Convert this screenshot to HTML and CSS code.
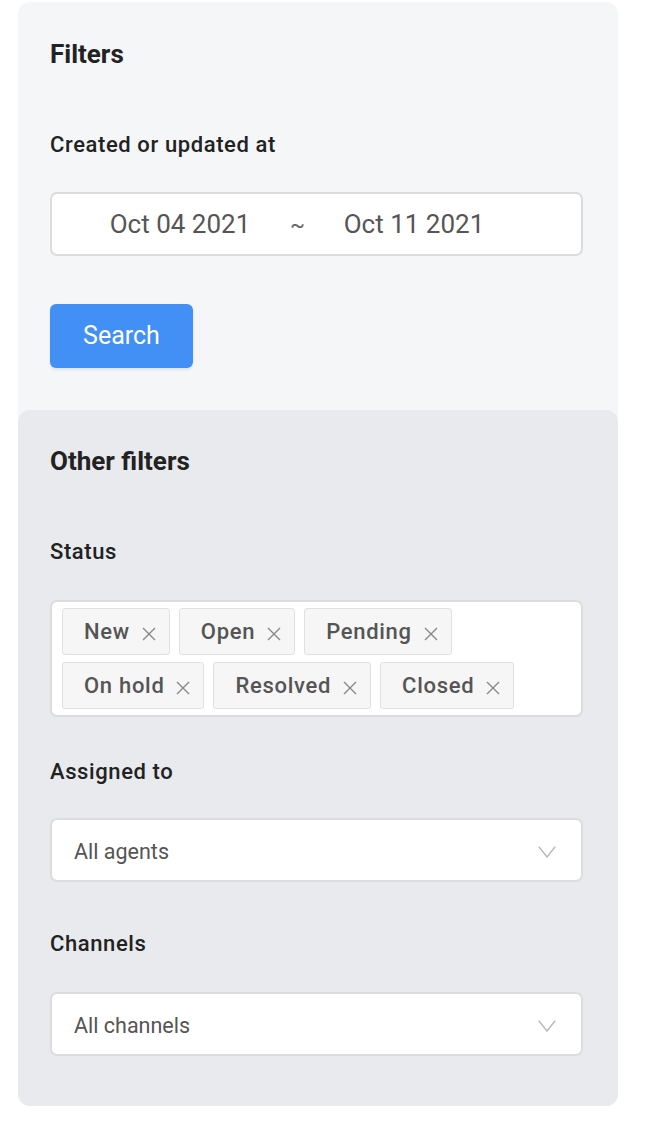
FILE: index.html
```html
<!DOCTYPE html>
<html lang="en">
<head>
<meta charset="utf-8">
<title>Filters</title>
<link rel="stylesheet" href="styles.css">
</head>
<body>
<aside class="panel">
  <section class="section section-top">
    <h2 class="title">Filters</h2>
    <div class="label label-first">Created or updated at</div>
    <div class="date-range">
      <span class="date date-from">Oct 04 2021</span>
      <span class="date-sep">~</span>
      <span class="date date-to">Oct 11 2021</span>
    </div>
    <button class="btn-search" type="button">Search</button>
  </section>
  <section class="section section-other">
    <h2 class="title">Other filters</h2>
    <div class="label label-first">Status</div>
    <div class="tags-box">
      <span class="tag">New<svg class="tag-x" viewBox="0 0 14 14"><path d="M1 1L13 13M13 1L1 13"/></svg></span>
      <span class="tag">Open<svg class="tag-x" viewBox="0 0 14 14"><path d="M1 1L13 13M13 1L1 13"/></svg></span>
      <span class="tag">Pending<svg class="tag-x" viewBox="0 0 14 14"><path d="M1 1L13 13M13 1L1 13"/></svg></span>
      <span class="tag">On hold<svg class="tag-x" viewBox="0 0 14 14"><path d="M1 1L13 13M13 1L1 13"/></svg></span>
      <span class="tag">Resolved<svg class="tag-x" viewBox="0 0 14 14"><path d="M1 1L13 13M13 1L1 13"/></svg></span>
      <span class="tag">Closed<svg class="tag-x" viewBox="0 0 14 14"><path d="M1 1L13 13M13 1L1 13"/></svg></span>
    </div>
    <div class="label label-assigned">Assigned to</div>
    <div class="select select-agents">
      <span class="select-text">All agents</span>
      <svg class="chevron" viewBox="0 0 18 12"><path d="M0.8 0.8L9 11L17.2 0.8"/></svg>
    </div>
    <div class="label label-channels">Channels</div>
    <div class="select select-channels">
      <span class="select-text">All channels</span>
      <svg class="chevron" viewBox="0 0 18 12"><path d="M0.8 0.8L9 11L17.2 0.8"/></svg>
    </div>
  </section>
</aside>
</body>
</html>
```

FILE: styles.css
```css
* { box-sizing: border-box; }

body {
  margin: 0;
  background: #ffffff;
  font-family: Roboto, "Liberation Sans", Arial, sans-serif;
  color: #222222;
}

.panel {
  width: 600px;
  margin: 2px 0 0 18px;
  background: #f5f6f8;
  border-radius: 12px;
}

.section-top {
  padding: 36px 35px 42px 32px;
}

.section-other {
  background: #e9eaee;
  border-radius: 12px;
  padding: 35px 35px 50px 32px;
}

.title {
  margin: 0;
  font-size: 26px;
  line-height: 32px;
  font-weight: 700;
  color: #222222;
}

.label {
  font-size: 22px;
  line-height: 28px;
  font-weight: 500;
  letter-spacing: 0.6px;
  color: #222222;
}

.label-first { margin-top: 61px; }
.label-assigned { margin-top: 41px; }
.label-channels { margin-top: 48px; }

.date-range {
  margin-top: 33px;
  height: 64px;
  background: #ffffff;
  border: 2px solid #dcdcdc;
  border-radius: 7px;
  display: flex;
  align-items: center;
  font-size: 26px;
  color: #555555;
}

.date {
  width: 220px;
  text-align: center;
}

.date-from { margin-left: 18px; }

.date-sep {
  width: 14px;
  text-align: center;
  font-size: 22px;
  color: #666666;
}

.btn-search {
  display: block;
  margin-top: 48px;
  width: 143px;
  height: 64px;
  padding: 0 0 2px;
  border: none;
  border-radius: 6px;
  background: #4290f5;
  color: #ffffff;
  font-family: Roboto, "Liberation Sans", Arial, sans-serif;
  font-size: 25px;
  font-weight: 400;
  box-shadow: 0 2px 3px rgba(0, 0, 0, 0.08);
}

.tags-box {
  margin-top: 34px;
  background: #ffffff;
  border: 2px solid #dcdcdc;
  border-radius: 7px;
  padding: 6px 10px;
  display: flex;
  flex-wrap: wrap;
  gap: 7px 9px;
}

.tag {
  display: inline-flex;
  align-items: center;
  height: 47px;
  padding: 0 13px 0 21px;
  background: #f6f6f6;
  border: 1px solid #e0e0e0;
  border-radius: 3px;
  font-size: 22px;
  font-weight: 500;
  letter-spacing: 0.7px;
  color: #555555;
}

.tag-x {
  width: 14px;
  height: 14px;
  margin-left: 12px;
  margin-top: 4px;
  fill: none;
  stroke: #888888;
  stroke-width: 1.4;
}

.select {
  height: 64px;
  background: #ffffff;
  border: 2px solid #dcdcdc;
  border-radius: 7px;
  display: flex;
  align-items: center;
  justify-content: space-between;
  padding: 0 25px 0 22px;
  font-size: 21.5px;
  color: #555555;
}

.select-text { padding-top: 3px; }

.select-agents { margin-top: 32px; }
.select-channels { margin-top: 34px; }

.chevron {
  width: 18px;
  height: 12px;
  margin-top: 3px;
  fill: none;
  stroke: #b8b8b8;
  stroke-width: 1.4;
}
```
